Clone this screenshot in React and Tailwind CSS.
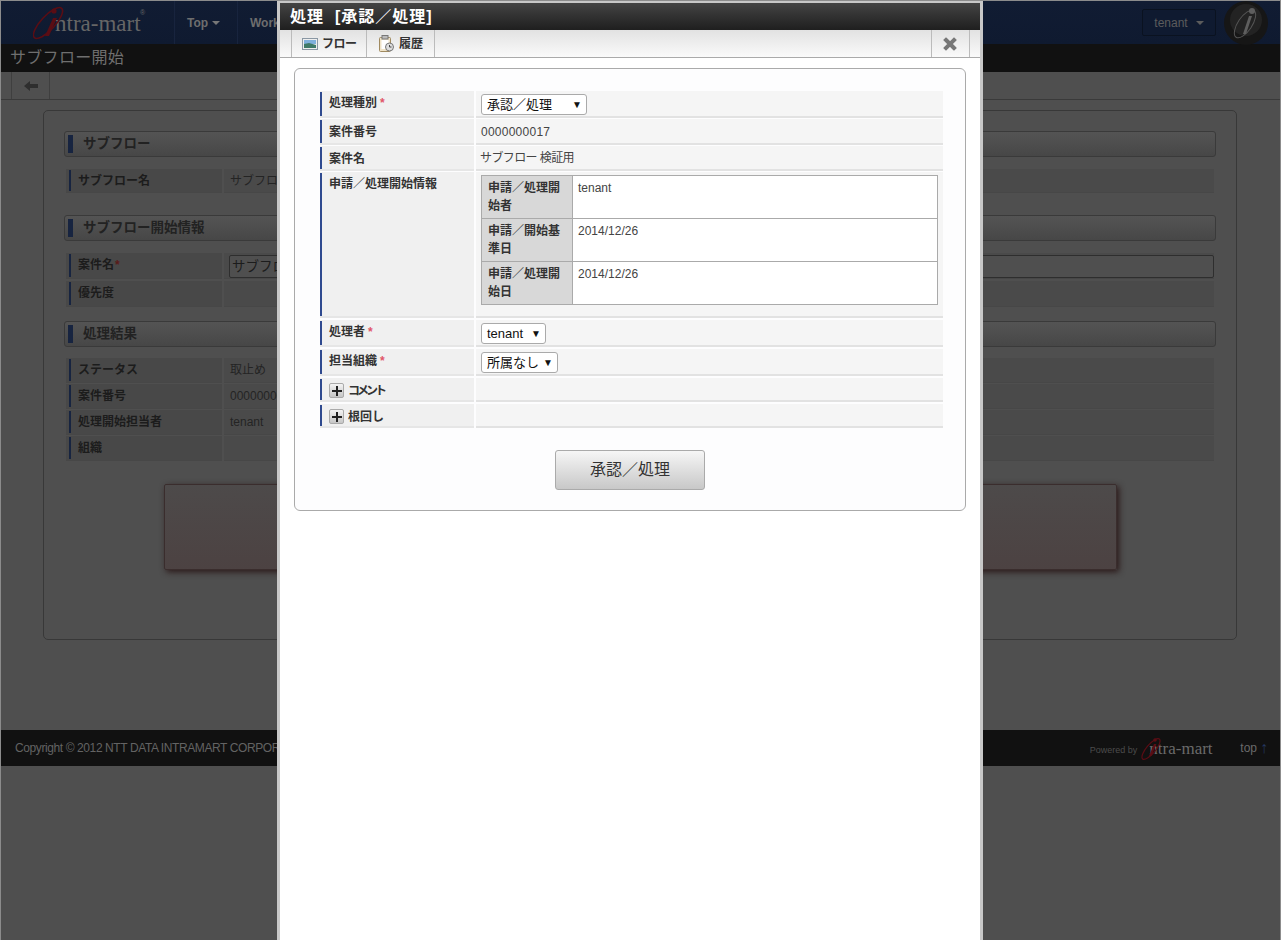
const Logo = ({ small }) =>
  small ? (
    <div className="relative flex h-[24px] w-[74px] items-end">
      <svg className="absolute left-0 top-0" width="24" height="24" viewBox="0 0 24 24">
        <ellipse cx="10" cy="13" rx="4.5" ry="13" transform="rotate(40 10 13)" fill="none" stroke="#5a0d14" strokeWidth="1.2" />
        <path d="M13 8 L8 20 L10.5 20 L15.5 8 Z" fill="#5a0d14" />
        <circle cx="14" cy="4" r="1.8" fill="#5a0d14" />
      </svg>
      <span className="ml-[8px] whitespace-nowrap font-['Liberation_Serif',serif] text-[17px] leading-[22px] text-[#6a6a6a]">ntra-mart</span>
    </div>
  ) : (
    <div className="relative flex h-[36px] w-[114px] items-end">
      <svg className="absolute left-0 top-0" width="50" height="36" viewBox="0 0 50 36">
        <ellipse cx="15" cy="18" rx="7" ry="20" transform="rotate(43 15 18)" fill="none" stroke="#5a0d14" strokeWidth="1.6" />
        <path d="M20 13 L12 31 L16 31 L24 13 Z" fill="#5a0d14" />
        <circle cx="21" cy="6" r="2.6" fill="#5a0d14" />
      </svg>
      <span className="mb-[2px] ml-[22px] whitespace-nowrap font-['Liberation_Serif',serif] text-[23px] leading-[30px] text-[#666]">ntra-mart</span>
      <span className="absolute left-[107px] top-[3px] text-[7px] leading-[10px] text-[#666]">®</span>
    </div>
  );

const Caret = ({ color = "border-t-[#777]" }) => (
  <span className={`ml-[4px] inline-block h-0 w-0 border-x-[4px] border-t-[4px] border-x-transparent ${color}`} />
);

const BgSection = ({ children, top }) => (
  <div className={`flex h-[26px] items-center rounded-[3px] border border-[#3a3a3a] bg-gradient-to-b from-[#545454] to-[#474747] pl-[3px] ${top}`}>
    <span className="h-[18px] w-[5px] bg-[#172440]" />
    <span className="ml-[10px] text-[13.5px] font-bold text-[#222]">{children}</span>
  </div>
);

const BgRow = ({ label, value, h = "h-[26px]", input, req }) => (
  <div className={`mx-[2px] flex gap-[2px] ${h}`}>
    <div className="flex w-[156px] border-b border-[#474747] bg-[#484848] py-[1px] pl-[3px]">
      <span className="h-full w-[2px] bg-[#172440]" />
      <span className="ml-[7px] pt-[2px] text-[12px] font-bold leading-[18px] text-[#1c1c1c]">
        {label}
        {req && <span className="ml-[1px] text-[#5a1a1a]">*</span>}
      </span>
    </div>
    <div className="flex-1 border-b border-[#474747] bg-[#4a4a4a] pl-[6px] pt-[3px] text-[12px] leading-[18px] text-[#242424]">
      {input ? (
        <div className="-ml-[1px] -mt-[1px] h-[23px] rounded-[2px] border border-[#2e2e2e] bg-[#4f4f4f] pl-[2px] text-[13.5px] leading-[21px] text-[#1c1c1c]">{value}</div>
      ) : (
        value
      )}
    </div>
  </div>
);

const Row = ({ label, req, top, h, plus, lp = "pt-[3px]", children }) => (
  <div className={`flex gap-[2px] ${top} ${h}`}>
    <div className="flex w-[154px] border-b-2 border-[#e6e6e6] bg-[#f0f0f0] pt-[1px]">
      <span className="h-full w-[2px] bg-[#2f4a8f]" />
      <div className={`ml-[7px] flex items-start text-[12px] font-bold leading-[18px] text-[#333] ${lp}`}>
        {plus && (
          <span className="mr-[4px] mt-[1px] flex h-[15px] w-[15px] items-center justify-center rounded-[2px] border border-[#aaa] bg-gradient-to-b from-[#f4f4f4] to-[#c6c6c6]">
            <svg width="10" height="10" viewBox="0 0 10 10">
              <path d="M4 0h2v4h4v2H6v4H4V6H0V4h4z" fill="#222" />
            </svg>
          </span>
        )}
        {label}
        {req && <span className="ml-[3px] text-[12px] font-bold text-[#e0566a]">*</span>}
      </div>
    </div>
    <div className="flex-1 border-b-2 border-[#e2e2e2] bg-[#f5f5f5] pl-[5px] pt-[3px] text-[12px] leading-[18px] text-[#444]">
      {children}
    </div>
  </div>
);

const Sel = ({ w, children }) => (
  <div className={`flex h-[21px] items-center justify-between rounded-[3px] border border-[#aaa] bg-white pl-[5px] pr-[4px] text-[13px] text-[#111] ${w}`}>
    <span>{children}</span>
    <span className="text-[10px] leading-none">▼</span>
  </div>
);

const Sub = ({ th, td, last }) => (
  <div className={`flex ${last ? "h-[42px]" : "h-[43px] border-b border-[#aaa]"}`}>
    <div className="w-[91px] border-r border-[#aaa] bg-[#d8d8d8] pl-[6px] pr-[6px] pt-[3px] text-[12px] font-bold leading-[18px] text-[#333]">{th}</div>
    <div className="flex-1 bg-white pl-[5px] pt-[3px] text-[12px] leading-[18px] text-[#444]">{td}</div>
  </div>
);

export default function App() {
  return (
    <div className="relative h-[940px] w-[1281px] overflow-hidden border-x border-t border-[#8c8c8c] bg-[#4f4f4f] [font-family:'Liberation_Sans','Noto_Sans_CJK_JP',sans-serif]">
      {/* header */}
      <div className="flex h-[43px] items-center bg-gradient-to-b from-[#111c33] to-[#0f1a30] pr-[12px]">
        <div className="ml-[32px] w-[141px]">
          <Logo />
        </div>
        <div className="flex h-full w-[63px] items-center border-l border-[#18243e] pl-[12px] text-[12px] font-bold text-[#6e6e6e]">
          Top <Caret />
        </div>
        <div className="flex h-full flex-1 items-center border-l border-[#18243e] pl-[12px] text-[12px] font-bold text-[#6e6e6e]">Workflow</div>
        <div className="flex h-[27px] w-[74px] items-center justify-center rounded-[2px] border border-[#0a1220] bg-[#0f1a30] text-[12px] text-[#5c5c5c]">
          tenant
          <Caret color="border-t-[#5c5c5c] ml-[8px]" />
        </div>
        <svg className="ml-[8px]" width="44" height="44" viewBox="0 0 44 44">
          <circle cx="22" cy="22" r="22" fill="#161616" />
          <circle cx="22" cy="19" r="16" fill="#232323" />
          <ellipse cx="21" cy="23" rx="7" ry="16" transform="rotate(34 21 23)" fill="none" stroke="#555" strokeWidth="1" />
          <path d="M25 15 L19 33 L22 33 L28 15 Z" fill="#5e5e5e" />
          <circle cx="28" cy="10" r="3" fill="#5e5e5e" />
        </svg>
      </div>
      {/* title */}
      <div className="flex h-[28px] items-center bg-[#111] pl-[9px] text-[16px] tracking-[0.3px] text-[#6f6f6f]">サブフロー開始</div>
      {/* toolbar */}
      <div className="flex h-[28px] border-b border-[#3a3a3a] pl-[10px]">
        <div className="flex w-[39px] items-center justify-center border-x border-[#3f3f3f]">
          <svg width="14" height="12" viewBox="0 0 14 12">
            <path d="M0 6 L6 1 V4 H14 V8 H6 V11 Z" fill="#2e2e2e" />
          </svg>
        </div>
      </div>
      {/* main card */}
      <div className="ml-[42px] mt-[10px] h-[530px] w-[1194px] rounded-[5px] border border-[#383838] px-[20px] pt-[20px]">
        <BgSection>サブフロー</BgSection>
        <div className="mt-[12px]">
          <BgRow label="サブフロー名" value="サブフロー検証用" h="h-[24px]" />
        </div>
        <BgSection top="mt-[22px]">サブフロー開始情報</BgSection>
        <div className="mt-[12px] flex flex-col gap-[2px]">
          <BgRow label="案件名" req value="サブフロー検証用" input />
          <BgRow label="優先度" value="" />
        </div>
        <BgSection top="mt-[14px]">処理結果</BgSection>
        <div className="mt-[11px] flex flex-col gap-[1px]">
          <BgRow label="ステータス" value="取止め" h="h-[25px]" />
          <BgRow label="案件番号" value="0000000017" h="h-[25px]" />
          <BgRow label="処理開始担当者" value="tenant" h="h-[25px]" />
          <BgRow label="組織" value="" h="h-[25px]" />
        </div>
        <div className="ml-[100px] mt-[23px] h-[86px] w-[953px] rounded-[2px] border border-[#3a2d2d] bg-gradient-to-b from-[#4d4a4a] to-[#4c4242] shadow-[2px_2px_6px_#2a1818]" />
      </div>
      {/* footer */}
      <div className="mt-[90px] flex h-[36px] items-center bg-[#111] pl-[14px] pr-[12px]">
        <span className="text-[12px] tracking-[-0.4px] text-[#636363]">Copyright © 2012 NTT DATA INTRAMART CORPORATION</span>
        <div className="ml-auto flex items-center">
          <span className="mr-[4px] mt-[6px] text-[9px] text-[#4c4c4c]">Powered by</span>
          <Logo small />
          <span className="ml-[25px] text-[12px] text-[#6a6a6a]">top</span>
          <span className="ml-[3px] text-[16px] leading-[16px] text-[#24365f]">↑</span>
        </div>
      </div>

      {/* dialog */}
      <div className="absolute left-[276px] top-[-1px] h-[941px] w-[706px] border-x-[3px] border-t-[3px] border-[#c8c8c8] bg-white">
        <div className="flex h-[27px] items-center whitespace-pre bg-gradient-to-b from-[#444] to-[#1f1f1f] pl-[10px] text-[16px] font-bold tracking-[1px] text-white">処理  [承認／処理]</div>
        <div className="flex h-[28px] border-b border-[#aaa] bg-gradient-to-b from-[#e2e2e2] to-[#fafafa] pl-[11px] pr-[10px]">
          <div className="flex w-[76px] items-center border-x border-[#bbb] pl-[10px] text-[12px] font-bold tracking-[-0.5px] text-[#333]">
            <svg className="mr-[4px]" width="16" height="12" viewBox="0 0 16 12">
              <rect x="0.5" y="0.5" width="15" height="11" fill="#eee" stroke="#8a97a3" />
              <rect x="2" y="2" width="12" height="4" fill="#7fb0dc" />
              <path d="M2 10 V6 L7 5 L14 7 V10 Z" fill="#3f7a68" />
            </svg>
            フロー
          </div>
          <div className="flex w-[68px] items-center border-r border-[#bbb] pl-[12px] text-[12px] font-bold text-[#333]">
            <svg className="mr-[5px]" width="15" height="17" viewBox="0 0 15 17">
              <rect x="0.5" y="2.5" width="11" height="14" rx="1" fill="#efe3c8" stroke="#a08a60" />
              <rect x="3" y="0.5" width="6" height="3.5" fill="#bbb" stroke="#777" />
              <rect x="2.5" y="5" width="7" height="9" fill="#fff" />
              <circle cx="10.5" cy="12" r="4" fill="#ddd" stroke="#777" />
              <path d="M10.5 10 V12 H12.5" fill="none" stroke="#444" />
            </svg>
            履歴
          </div>
          <div className="ml-auto flex w-[39px] items-center justify-center border-x border-[#bbb] pr-[1px]">
            <svg width="14" height="14" viewBox="0 0 14 14">
              <path d="M3 3 L11 11 M11 3 L3 11" stroke="#777" strokeWidth="4" strokeLinecap="square" />
            </svg>
          </div>
        </div>
        {/* panel */}
        <div className="ml-[14px] mt-[10px] h-[443px] w-[672px] rounded-[6px] border border-[#aaa] bg-[#fdfdfe] pl-[25px] pt-[22px]">
          <div className="w-[623px]">
            <Row label="処理種別" req lp="pt-[2px]" h="h-[27px]">
              <Sel w="w-[106px]">承認／処理</Sel>
            </Row>
            <Row label="案件番号" top="mt-[1px]" h="h-[26px]">
              <div className="pt-[1px] tracking-[0.25px]">0000000017</div>
            </Row>
            <Row label="案件名" top="mt-[1px]" h="h-[25px]">
              <div className="-ml-[1px] tracking-[-0.6px]">サブフロー 検証用</div>
            </Row>
            <Row label="申請／処理開始情報" lp="pt-[2px]" top="mt-[1px]" h="h-[146px]">
              <div className="w-[457px] border border-[#aaa]">
                <Sub th="申請／処理開始者" td="tenant" />
                <Sub th="申請／開始基準日" td="2014/12/26" />
                <Sub th="申請／処理開始日" td="2014/12/26" last />
              </div>
            </Row>
            <Row label="処理者" req lp="pt-[2px]" top="mt-[2px]" h="h-[27px]">
              <Sel w="w-[65px]">tenant</Sel>
            </Row>
            <Row label="担当組織" req lp="pt-[2px]" top="mt-[2px]" h="h-[27px]">
              <Sel w="w-[77px]">所属なし</Sel>
            </Row>
            <Row label={<span className="tracking-[-3px]">コメント</span>} plus top="mt-[2px]" h="h-[24px]" />
            <Row label="根回し" plus top="mt-[2px]" h="h-[24px]" />
          </div>
          <div className="ml-[235px] mt-[22px] flex h-[40px] w-[150px] items-center justify-center rounded-[3px] border border-[#aaa] bg-gradient-to-b from-[#f6f6f6] to-[#c8c8c8] text-[16px] text-[#333]">
            承認／処理
          </div>
        </div>
      </div>
    </div>
  );
}
